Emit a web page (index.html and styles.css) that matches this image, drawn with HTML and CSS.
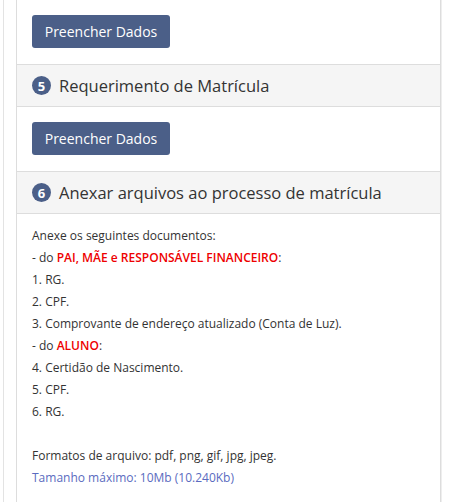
FILE: index.html
```html
<!DOCTYPE html>
<html>
<head>
<meta charset="utf-8">
<link rel="stylesheet" href="styles.css">
</head>
<body>
<div class="page">
  <div class="panel">
    <div class="body body-top">
      <button class="btn">Preencher Dados</button>
    </div>
    <div class="head"><span class="num">5</span><span class="title">Requerimento de Matrícula</span></div>
    <div class="body">
      <button class="btn">Preencher Dados</button>
    </div>
    <div class="head"><span class="num">6</span><span class="title">Anexar arquivos ao processo de matrícula</span></div>
    <div class="body text">
      <p>Anexe os seguintes documentos:</p>
      <p>- do <b class="red">PAI, MÃE e RESPONSÁVEL FINANCEIRO</b>:</p>
      <p>1. RG.</p>
      <p>2. CPF.</p>
      <p>3. Comprovante de endereço atualizado (Conta de Luz).</p>
      <p>- do <b class="red">ALUNO</b>:</p>
      <p>4. Certidão de Nascimento.</p>
      <p>5. CPF.</p>
      <p>6. RG.</p>
      <p class="gap">Formatos de arquivo: pdf, png, gif, jpg, jpeg.</p>
      <p class="blue">Tamanho máximo: 10Mb (10.240Kb)</p>
    </div>
  </div>
</div>
</body>
</html>
```
FILE: styles.css
```css
html, body {
  margin: 0;
  padding: 0;
  background: #fff;
  font-family: "Open Sans", "Liberation Sans", sans-serif;
  color: #333;
}
.page {
  margin-left: 3px;
  border-left: 1px solid #e3e3e3;
  padding-left: 12px;
  width: 425px;
  min-height: 502px;
}
.panel {
  border-left: 1px solid #ddd;
  border-right: 1px solid #ddd;
  box-shadow: 1px 0 0 #eee;
  width: 423px;
  min-height: 502px;
}
.body {
  padding: 15px 15px 16px;
}
.btn {
  display: block;
  background: #4b5f88;
  color: #fff;
  border: none;
  border-radius: 3px;
  height: 33px;
  width: 138px;
  padding: 0;
  font-family: "Open Sans", "Liberation Sans", sans-serif;
  font-size: 14px;
}
.head {
  display: flex;
  align-items: center;
  gap: 8px;
  height: 41px;
  padding: 0 15px;
  background: #f5f5f5;
  border-top: 1px solid #ddd;
  border-bottom: 1px solid #ddd;
}
.num {
  width: 19px;
  height: 19px;
  border-radius: 50%;
  background: #4b5f88;
  color: #fff;
  font-size: 13px;
  font-weight: 700;
  display: flex;
  align-items: center;
  justify-content: center;
}
.title {
  font-size: 16.5px;
  color: #333;
}
.text {
  padding-top: 11px;
  font-size: 12px;
}
.text p {
  margin: 0;
  line-height: 22px;
}
.text .gap {
  margin-top: 22px;
}
.red {
  color: #e00;
  font-weight: 600;
}
.blue {
  color: #5a6bc0;
}
```
